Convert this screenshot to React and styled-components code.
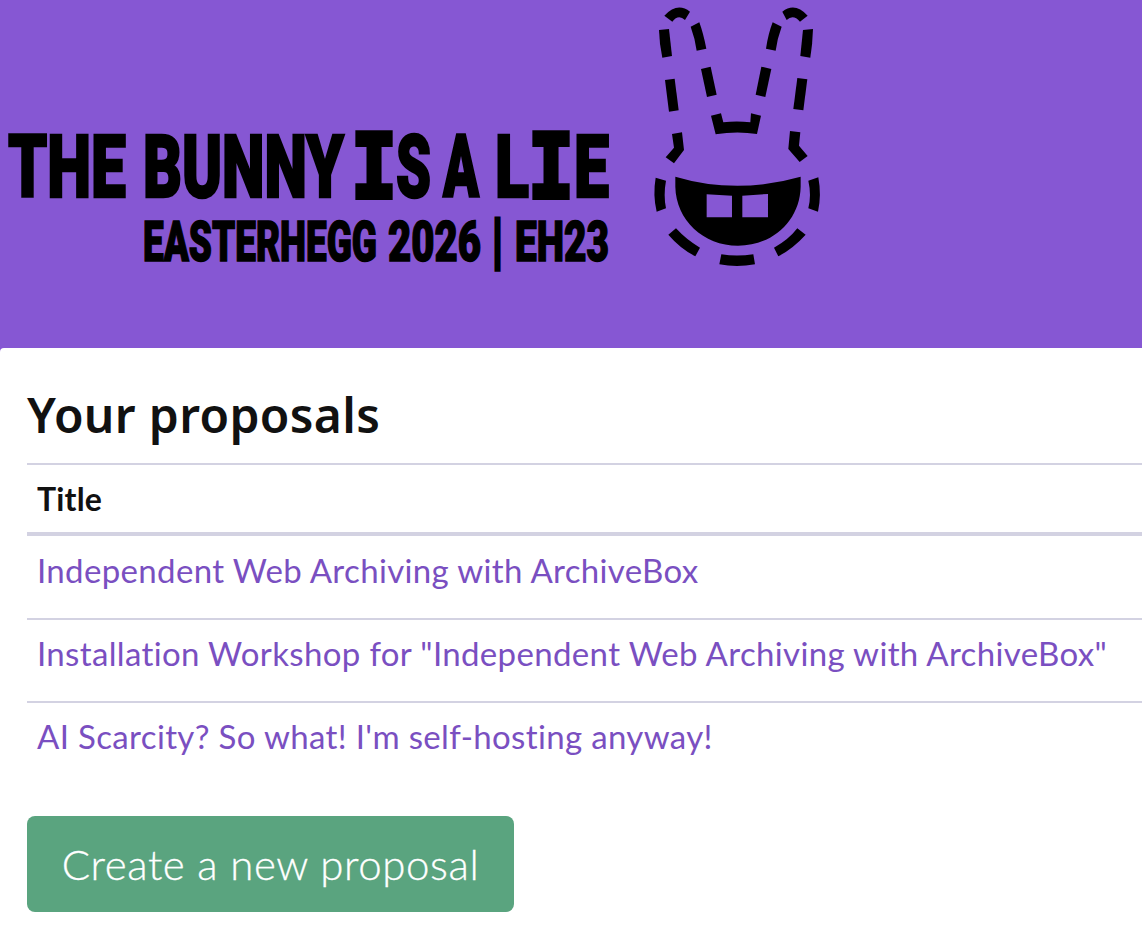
import React from 'react';
import styled, { createGlobalStyle } from 'styled-components';

const Global = createGlobalStyle`
  html, body { margin: 0; padding: 0; background: #fff; }
  body { font-family: "Lato", "Open Sans", sans-serif; font-variant-ligatures: none; overflow-x: hidden; }
`;

const Page = styled.div`
  width: 1142px;
  height: 946px;
  overflow: hidden;
  background: #8657d3;
`;

const Banner = styled.header`
  height: 348px;
  background: #8657d3;
  svg { display: block; }
`;

const Main = styled.main`
  height: 598px;
  background: #fff;
  border-top-left-radius: 4px;
  padding-left: 27px;
  overflow: hidden;
`;

const Heading = styled.h1`
  margin: 0;
  height: 115px;
  box-sizing: border-box;
  padding-top: 33px;
  font-family: "Noto Sans", sans-serif;
  font-size: 48px;
  line-height: 68px;
  font-weight: 600;
  letter-spacing: 0.35px;
  color: #111;
  white-space: nowrap;
`;

const Table = styled.div`
  width: 1200px;
  border-top: 2px solid #d3d2e2;
`;

const HeadRow = styled.div`
  height: 71px;
  box-sizing: border-box;
  padding: 0 10px 0;
  display: flex;
  align-items: center;
  font-size: 32px;
  font-weight: 700;
  letter-spacing: 0.2px;
  color: #111;
  border-bottom: 4px solid #d3d2e2;
`;

const Row = styled.div`
  height: ${props => (props.$first ? '84px' : '83px')};
  box-sizing: border-box;
  padding: 0 10px ${props => (props.$first ? '14px' : props.$last ? '17px' : '15px')};
  display: flex;
  align-items: center;
  border-bottom: ${props => (props.$last ? 'none' : '2px solid #d3d2e2')};
`;

const TitleLink = styled.a`
  font-size: 33px;
  letter-spacing: 0.35px;
  color: #7a4fc1;
  text-decoration: none;
  white-space: nowrap;
`;

const CreateButton = styled.a`
  display: inline-flex;
  align-items: center;
  justify-content: center;
  margin-top: 30px;
  width: 487px;
  height: 96px;
  border-radius: 8px;
  background: #5aa47f;
  color: #fff;
  font-size: 42px;
  font-weight: 300;
  letter-spacing: 0.6px;
  -webkit-text-stroke: 0.3px #fff;
  text-decoration: none;
  white-space: nowrap;
`;

const proposals = [
  'Independent Web Archiving with ArchiveBox',
  'Installation Workshop for "Independent Web Archiving with ArchiveBox"',
  "AI Scarcity? So what! I'm self-hosting anyway!",
];

const bunny = [
  'M73 47Q112 5 150 35L135 60Q115 42 97 65Z',
  'M57 90L87 87L96 168L67 173Q58 130 57 90Z',
  'M152 80L178 67Q190 100 199 146L170 152Q165 115 152 80Z',
  'M183 207L212 200L230 284L201 291Z',
  'M75 240L104 236L116 331L87 335Z',
  'M96 402L126 397L132 450L102 490L77 472L102 443Z',
  'M213 347L243 340L250 367Q290 362 331 367L333 340L363 347L351 402Q290 392 227 403Z',
  'M427 35Q465 5 503 47L480 65Q460 42 440 60Z',
  'M489 90L519 87Q518 130 511 173L481 168Z',
  'M398 67L425 80Q412 115 407 152L378 146Q385 100 398 67Z',
  'M364 200L394 207L376 291L347 284Z',
  'M472 234L502 238L490 331L460 327Z',
  'M450 393L481 397L477 437L503 468L479 486L445 447Z',
  'M47 533L78 542Q70 585 78 625L50 635Q38 585 47 533Z',
  'M505 542L535 532Q545 585 534 635L505 625Q515 585 505 542Z',
  'M108 685Q140 720 180 743L166 769Q120 745 85 704Z',
  'M472 685L497 704Q460 745 415 769L402 743Q445 720 472 685Z',
  'M244 763Q290 770 340 763L345 793Q290 803 238 793Z',
];

const mouth =
  'M106 530Q290 585 482 530L482 560C480 660 400 737 294 737C190 737 108 660 106 560Z' +
  'M200 583L276 587L276 652L200 652Z' +
  'M307 587L384 582L384 652L307 652Z';

// logo lettering: one text per line, pieces placed so the widths follow the reference
const sans = "Roboto, 'Liberation Sans', sans-serif";
const mono = "'Liberation Mono', monospace";
const lines = [
  {
    y: 197,
    size: 88,
    stroke: 2.5,
    parts: [
      { t: 'THE', x: 8, w: 118, space: true },
      { t: 'BUNNY', x: 143, w: 201, space: true },
      { t: 'I', x: 352, w: 44, font: mono, size: 97, stroke: 6 },
      { t: 'S', x: 396, w: 35, space: true },
      { t: 'A', x: 443, w: 36, space: true },
      { t: 'L', x: 495, w: 34 },
      { t: 'I', x: 529, w: 44, font: mono, size: 97, stroke: 6 },
      { t: 'E', x: 574, w: 35 },
    ],
  },
  {
    y: 261,
    size: 55,
    stroke: 1.5,
    parts: [
      { t: 'EASTERHEGG', x: 143, w: 234, space: true },
      { t: '2026', x: 388, w: 93, space: true },
      { t: '|', x: 493, w: 9, stroke: 5, size: 60, space: true },
      { t: 'EH23', x: 515, w: 94 },
    ],
  },
];

const BannerArt = () => (
  <svg width="1142" height="348" viewBox="0 0 1142 348">
    {lines.map(line => (
      <text key={line.y} y={line.y} fontFamily={sans} fontWeight="900" fill="#000" stroke="#000">
        {line.parts.map(p => (
          <React.Fragment key={p.t + p.x}>
            <tspan
              x={p.x}
              fontFamily={p.font || sans}
              fontSize={p.size || line.size}
              strokeWidth={p.stroke || line.stroke}
              textLength={p.w}
              lengthAdjust="spacingAndGlyphs"
            >
              {p.t}
            </tspan>
            {p.space ? ' ' : null}
          </React.Fragment>
        ))}
      </text>
    ))}
    <g transform="translate(640 0) scale(0.3333)" fill="#000">
      {bunny.map(d => (
        <path key={d} d={d} />
      ))}
      <path d={mouth} fillRule="evenodd" />
    </g>
  </svg>
);

export default function App() {
  return (
    <Page>
      <Global />
      <Banner>
        <BannerArt />
      </Banner>
      <Main>
        <Heading>Your proposals</Heading>
        <Table>
          <HeadRow>Title</HeadRow>
          {proposals.map((title, i) => (
            <Row key={title} $first={i === 0} $last={i === proposals.length - 1}>
              <TitleLink href="#">{title}</TitleLink>
            </Row>
          ))}
        </Table>
        <CreateButton href="#">Create a new proposal</CreateButton>
      </Main>
    </Page>
  );
}
